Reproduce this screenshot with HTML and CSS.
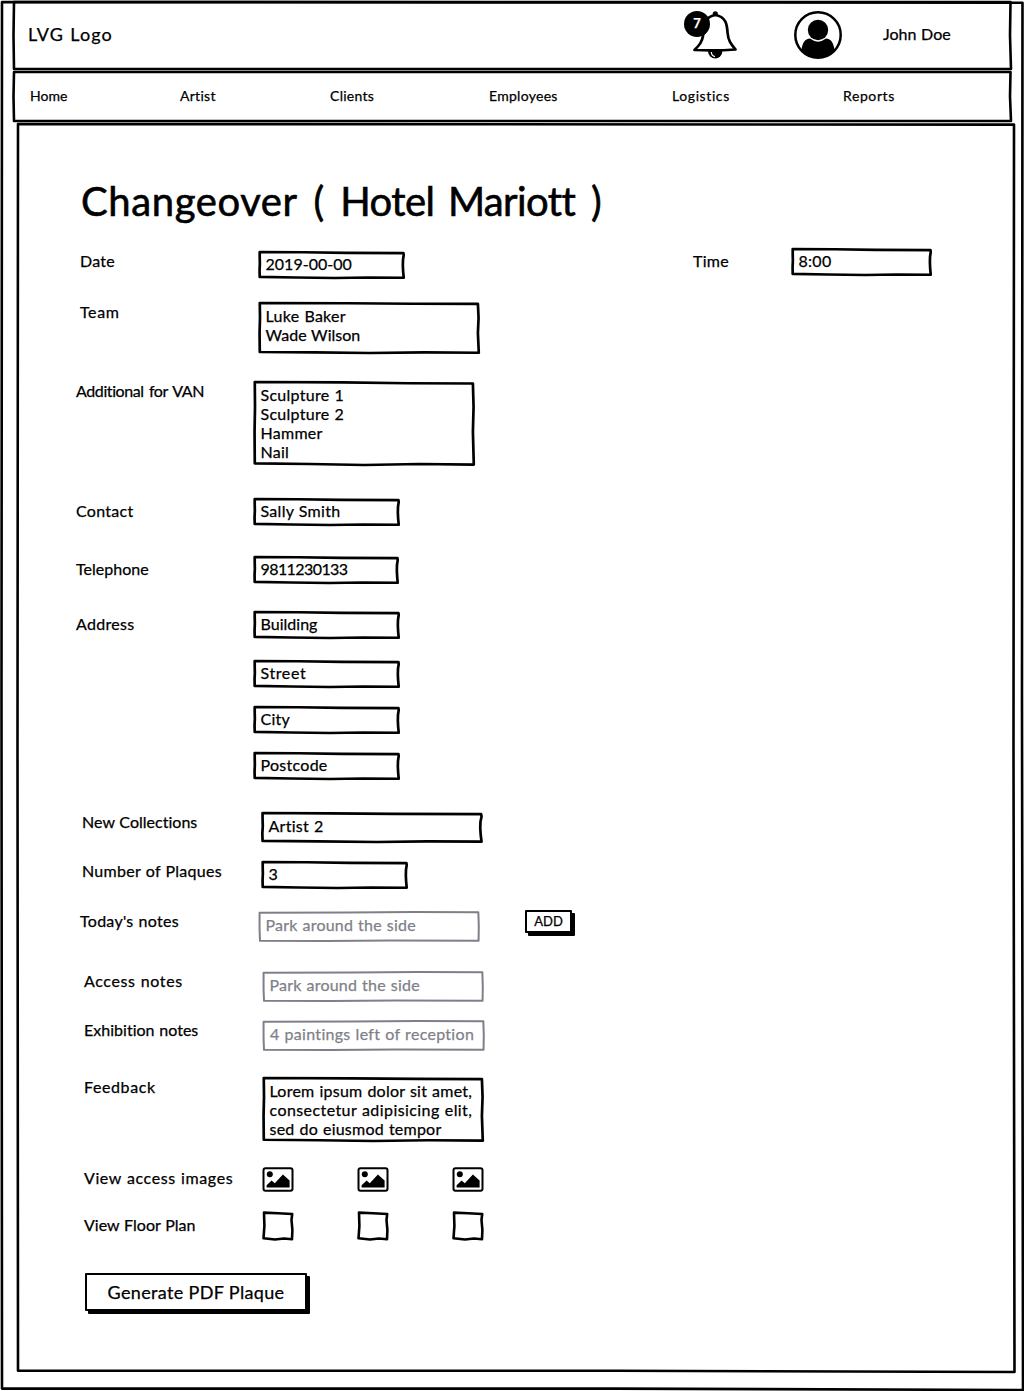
FILE: index.html
```html
<!DOCTYPE html>
<html lang="en">
<head>
<meta charset="utf-8">
<title>Changeover</title>
<link rel="stylesheet" href="styles.css">
</head>
<body>
<svg class="defs" aria-hidden="true">
  <symbol id="small" viewBox="0 0 100 100" preserveAspectRatio="none" overflow="visible">
    <path vector-effect="non-scaling-stroke" d="M-.2 0L30 1L60 3L99.600 4L99.800 12L99.300 30L99.200 52L99.400 75L99.800 99L75 98L52 100L25 98L-.2 96L-.3 70L-.1 45L-.2 20Z"/>
  </symbol>
  <symbol id="large" viewBox="0 0 100 100" preserveAspectRatio="none" overflow="visible">
    <path vector-effect="non-scaling-stroke" d="M-.1 0L40 0.500L70 1.500L99.500 1.800L99.800 30L99.500 60L99.900 99.500L75 98.800L50 100L25 98.800L-.1 98L-.2 60L0 30Z"/>
  </symbol>
  <symbol id="muted" viewBox="0 0 100 100" preserveAspectRatio="none" overflow="visible">
    <path vector-effect="non-scaling-stroke" d="M-.2 3L40 2L70 0L99.700 1L99.900 50L99.800 99L60 98.500L30 100L0 99.500L-.2 60Z"/>
  </symbol>
  <symbol id="frame" viewBox="0 0 100 100" preserveAspectRatio="none" overflow="visible">
    <path vector-effect="non-scaling-stroke" d="M0 0L99.950 0.050L99.900 50L100 100L60 99.900L0 99.900L-.05 50Z"/>
  </symbol>
  <symbol id="square" viewBox="0 0 32 30">
    <path d="M2 1.600L16 2.300L30.200 3L29.500 9L30.400 19L30 28.200L22 27.500L13 28.500L1.500 27.300L2.400 15Z"/>
  </symbol>
  <symbol id="picture" viewBox="0 0 32 25">
    <rect x="1.500" y="1.200" width="29" height="22.600" rx="2" fill="#fff" stroke="#000" stroke-width="2"/>
    <circle cx="7.800" cy="7.200" r="3"/>
    <path d="M4.600 20.600V18.300L9.600 13.600L12.800 16.300L20.900 7.400L27.600 13.600V20.600Z"/>
  </symbol>
</svg>
<div class="page box"><svg class="line"><use href="#frame"/></svg>
  <header class="top box"><svg class="line"><use href="#frame"/></svg>
    <span class="logo">LVG Logo</span>
    <div class="alerts">
      <svg width="54" height="50" viewBox="0 0 54 50">
        <path d="M24 40a7.200 7.500 0 0 0 14.400 0z"/>
        <path d="M27.300 41q.2 3.800 3.600 4.600" fill="none" stroke="#fff" stroke-width="1.200"/>
        <circle cx="31.300" cy="2.800" r="2.600"/>
        <path d="M10.500 39C15.500 34 18 31 19 25C20 14 20 6 31.300 4C42.500 6 43 14 43.600 22C44.300 30 47 33 51.500 38.500Q32 40 10.500 39Z" fill="#fff" stroke="#000" stroke-width="2.700" stroke-linejoin="round"/>
      </svg>
      <span class="count">7</span>
    </div>
    <svg class="avatar" width="48" height="48" viewBox="0 0 48 48">
      <circle cx="24" cy="24" r="22.700" fill="#fff" stroke="#000" stroke-width="2.500"/>
      <circle cx="24" cy="19" r="10.200"/>
      <path d="M7.500 40C8 31 12 27.600 16 27.600Q24 33.800 32 27.600C36 27.600 40 31 40.500 40A23 23 0 0 1 7.500 40Z"/>
    </svg>
    <span class="user">John Doe</span>
  </header>
  <nav class="nav box"><svg class="line"><use href="#frame"/></svg>
    <a class="tight">Home</a><a>Artist</a><a>Clients</a><a>Employees</a><a class="wide">Logistics</a><a class="wide">Reports</a>
  </nav>
  <main class="main box"><svg class="line"><use href="#frame"/></svg>
    <h1><span class="title-word">Changeover</span> ( <span class="title-place">Hotel Mariott</span> )</h1>
    <div class="row a date"><label>Date</label>
      <div class="field box short"><svg class="line"><use href="#small"/></svg><span class="tight">2019-00-00</span></div>
      <label class="time-label">Time</label>
      <div class="field box time"><svg class="line"><use href="#small"/></svg>8:00</div>
    </div>
    <div class="row a team"><label class="wide">Team</label>
      <div class="field box"><svg class="line"><use href="#large"/></svg><span>Luke Baker</span><br><span class="tight">Wade Wilson</span></div></div>
    <div class="row b van"><label class="snug">Additional for VAN</label>
      <div class="field box"><svg class="line"><use href="#large"/></svg>Sculpture 1<br>Sculpture 2<br>Hammer<br>Nail</div></div>
    <div class="row b mid contact"><label>Contact</label>
      <div class="field box short"><svg class="line"><use href="#small"/></svg><span>Sally Smith</span></div></div>
    <div class="row b mid phone"><label class="tight">Telephone</label>
      <div class="field box short"><svg class="line"><use href="#small"/></svg><span class="digits">9811230133</span></div></div>
    <div class="row b mid building"><label>Address</label>
      <div class="field box short"><svg class="line"><use href="#small"/></svg><span class="tight">Building</span></div></div>
    <div class="row b mid street"><label></label>
      <div class="field box short"><svg class="line"><use href="#small"/></svg><span class="wide">Street</span></div></div>
    <div class="row b mid street"><label></label>
      <div class="field box short"><svg class="line"><use href="#small"/></svg><span>City</span></div></div>
    <div class="row b mid postcode"><label></label>
      <div class="field box short"><svg class="line"><use href="#small"/></svg><span>Postcode</span></div></div>
    <div class="row c collections"><label class="tight">New Collections</label>
      <div class="field box one"><svg class="line"><use href="#small"/></svg>Artist 2</div></div>
    <div class="row c plaques"><label>Number of Plaques</label>
      <div class="field box short"><svg class="line"><use href="#small"/></svg>3</div></div>
    <div class="row a today"><label>Today's notes</label>
      <div class="field box one muted"><svg class="line"><use href="#muted"/></svg>Park around the side</div>
      <button class="add">ADD</button></div>
    <div class="row d access"><label class="wide">Access notes</label>
      <div class="field box one muted"><svg class="line"><use href="#muted"/></svg>Park around the side</div></div>
    <div class="row d exhibition"><label class="tight">Exhibition notes</label>
      <div class="field box one muted"><svg class="line"><use href="#muted"/></svg>4 paintings left of reception</div></div>
    <div class="row d feedback"><label class="wide">Feedback</label>
      <div class="field box"><svg class="line"><use href="#large"/></svg>Lorem ipsum dolor sit amet,<br><span class="lorem">consectetur adipisicing elit,</span><br>sed do eiusmod tempor</div></div>
    <div class="row d images"><label class="wide">View access images</label>
      <div class="icons"><svg><use href="#picture"/></svg><svg><use href="#picture"/></svg><svg><use href="#picture"/></svg></div></div>
    <div class="row d mid floor"><label class="tight">View Floor Plan</label>
      <div class="icons squares"><svg><use href="#square"/></svg><svg><use href="#square"/></svg><svg><use href="#square"/></svg></div></div>
    <button class="generate">Generate PDF Plaque</button>
  </main>
</div>
</body>
</html>
```
FILE: styles.css
```css
* { box-sizing: border-box; }
body {
  margin: 0;
  background: #fff;
  color: #000;
  font: 16px/19px Lato, "Open Sans", sans-serif;
  font-variant-ligatures: none;
  letter-spacing: .28px;
  word-spacing: .6px;
  -webkit-text-stroke: .25px currentColor;
  white-space: nowrap;
}
.defs { position: absolute; width: 0; height: 0; }

/* hand-drawn outline laid under a box's content */
.box { position: relative; }
.line {
  position: absolute;
  left: 1.5px;
  top: 1.5px;
  width: calc(100% - 3px);
  height: calc(100% - 3px);
  overflow: visible;
  fill: none;
  stroke: currentColor;
  stroke-width: 2.7px;
  stroke-linejoin: round;
  pointer-events: none;
}
.page > .line, .top > .line, .nav > .line, .main > .line { stroke-width: 2.6px; }

.page { width: 1024px; height: 1391px; padding-left: 12px; }
.top { display: flex; width: 1000px; height: 70px; padding-left: 16px; }
.logo { width: 656px; padding-top: 23px; font-size: 18px; line-height: 22px; letter-spacing: 1.1px; }
.alerts { position: relative; width: 110px; padding-top: 11px; }
.count {
  position: absolute;
  left: 0;
  top: 11px;
  width: 26px;
  height: 26px;
  border-radius: 50%;
  background: #000;
  color: #fff;
  font-size: 13px;
  font-weight: 700;
  line-height: 25px;
  letter-spacing: 0;
  text-align: center;
}
.avatar { margin-top: 11px; }
.user { padding: 24px 0 0 41px; letter-spacing: 0; }

.nav {
  display: grid;
  grid-template-columns: 150px 150px 159px 183px 171px auto;
  width: 1000px;
  height: 52px;
  padding: 16px 0 0 18px;
  font-size: 14px;
}

.main { width: 1000px; height: 1251px; margin: 1px 0 0 4px; padding-top: 54px; }
.main > .line { top: 1px; width: calc(100% - 3.5px); }
h1 {
  margin: 0 0 25px;
  padding-left: 65px;
  font-size: 40px;
  font-weight: 400;
  line-height: 48px;
  letter-spacing: .1px;
  word-spacing: 5.5px;
  -webkit-text-stroke-width: .6px;
}
.title-word { letter-spacing: .6px; }
.title-place { letter-spacing: -.6px; word-spacing: 4px; }

.row { display: flex; align-items: flex-start; }
.row label { padding-top: 1px; }
.row.mid label { padding-top: 4px; }
.a { padding-left: 64px; }
.a label:first-child { width: 178px; }
.b { padding-left: 60px; }
.b label { width: 177px; }
.c { padding-left: 66px; }
.c label { width: 179px; }
.d { padding-left: 68px; }
.d label { width: 178px; }

.field { width: 222px; height: 53px; padding: 5px 0 0 7.5px; }
.field.short { width: 147px; height: 29px; padding-top: 4px; }
.field.one { height: 32px; }
.muted { color: #7f7f89; letter-spacing: .22px; }
.muted .line { stroke-width: 2px; }
.date { height: 51px; }
.time-label { margin-left: 288px; width: 98px; }
.field.time { width: 141px; height: 29px; margin-top: -3px; padding-top: 4px; }
.team { height: 79px; }
.van { height: 117px; }
.van .field { height: 86px; }
.contact { height: 58px; }
.phone { height: 55px; }
.phone .field { width: 146px; }
.building { height: 49px; }
.street { height: 46px; }
.postcode { height: 60px; }
.collections { height: 49px; }
.plaques { height: 50px; }
.today { height: 60px; }
.access { height: 49px; }
.exhibition { height: 57px; }
.exhibition .field { width: 223px; padding-left: 8px; letter-spacing: .3px; }
.feedback { height: 91px; }
.feedback .field { height: 66px; letter-spacing: .24px; }
.images { height: 44px; }
.floor { height: 62px; }

.icons { display: flex; gap: 63px; }
.icons svg { width: 32px; height: 25px; }
.icons.squares svg {
  height: 30px;
  fill: none;
  stroke: #000;
  stroke-width: 2.6px;
  stroke-linejoin: round;
}

button {
  border: 2.5px solid #000;
  border-radius: 1px;
  background: #fff;
  color: #000;
  font: inherit;
  padding: 0;
  -webkit-text-stroke: inherit;
}
.add {
  width: 47px;
  height: 23px;
  margin: 0 0 0 45px;
  box-shadow: 3px 3px 0 #000;
  font-size: 13px;
  line-height: 17px;
  letter-spacing: 0;
}
.generate {
  display: block;
  width: 222px;
  height: 38px;
  margin-left: 69px;
  box-shadow: 3px 3px 0 #000;
  font-size: 18px;
  letter-spacing: .35px;
}

.digits { letter-spacing: -.58px; }
.snug { letter-spacing: -.4px; word-spacing: 1.5px; }
.tight { letter-spacing: .02px; }
.wide { letter-spacing: .6px; }
.field .lorem { letter-spacing: .42px; }
```
